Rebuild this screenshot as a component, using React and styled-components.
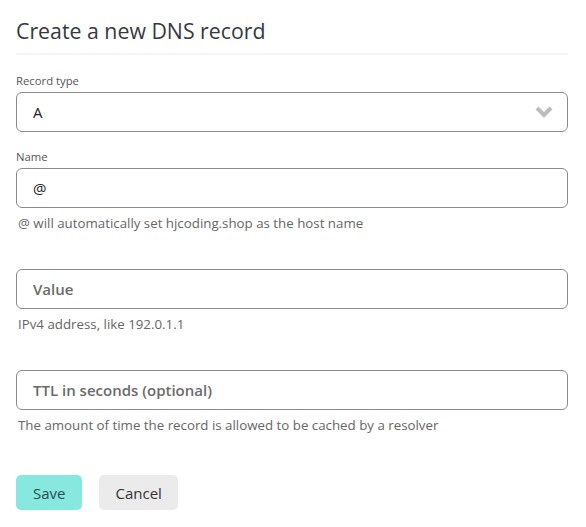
import React from "react";
import styled, { createGlobalStyle } from "styled-components";

const Global = createGlobalStyle`
  html, body { margin: 0; padding: 0; background: #fff; }
  body { font-family: "Open Sans", "Noto Sans", sans-serif; color: #333; }
  * { box-sizing: border-box; }
`;

const Page = styled.div`
  width: 586px;
  padding: 14px 18px 0 16px;
`;

const Title = styled.h2`
  margin: 0;
  font-size: 21.3px;
  font-weight: 500;
  line-height: 34px;
  color: #333a3f;
  padding-bottom: 5px;
  border-bottom: 2px solid #f4f4f4;
`;

const Form = styled.form`
  display: flex;
  flex-direction: column;
  padding-top: 18px;
`;

const Field = styled.div`
  display: flex;
  flex-direction: column;
  margin-bottom: ${(p) => p.$gap || 0}px;
`;

const Label = styled.label`
  font-size: 11.3px;
  line-height: 15px;
  color: #555;
  margin-bottom: 4px;
`;

const Box = styled.div`
  position: relative;
  height: 40px;
  border: 1px solid #8a8a8a;
  border-radius: 6px;
  display: flex;
  align-items: center;
  padding: 0 16px;
  font-size: 15px;
  color: ${(p) => (p.$placeholder ? "#6b6b6b" : "#222")};
  font-weight: ${(p) => (p.$placeholder ? 600 : 400)};
`;

const Chevron = styled.svg`
  position: absolute;
  right: 14px;
  top: 50%;
  transform: translateY(-50%);
`;

const Help = styled.div`
  font-size: 13.3px;
  line-height: 17px;
  color: #666;
  margin-top: 7px;
  padding-left: 2px;
`;

const Buttons = styled.div`
  display: flex;
  gap: 17px;
  margin-top: 41px;
`;

const Button = styled.button`
  height: 35px;
  border: none;
  border-radius: 5px;
  padding: 0 ${(p) => p.$px}px;
  font-family: inherit;
  font-size: 15px;
  background: ${(p) => (p.$primary ? "#86e8de" : "#ebebec")};
  color: ${(p) => (p.$primary ? "#2e4a55" : "#333")};
`;

export default function App() {
  return (
    <>
      <Global />
      <Page>
        <Title>Create a new DNS record</Title>
        <Form>
          <Field $gap={17}>
            <Label>Record type</Label>
            <Box>
              A
              <Chevron width="18" height="12" viewBox="0 0 18 12">
                <path d="M2 2 L9 9 L16 2" fill="none" stroke="#bcbcbc" strokeWidth="4" strokeLinejoin="miter" />
              </Chevron>
            </Box>
          </Field>
          <Field $gap={37}>
            <Label>Name</Label>
            <Box>@</Box>
            <Help>@ will automatically set hjcoding.shop as the host name</Help>
          </Field>
          <Field $gap={37}>
            <Box $placeholder>Value</Box>
            <Help>IPv4 address, like 192.0.1.1</Help>
          </Field>
          <Field>
            <Box $placeholder>TTL in seconds (optional)</Box>
            <Help>The amount of time the record is allowed to be cached by a resolver</Help>
          </Field>
          <Buttons>
            <Button type="button" $primary $px={17}>Save</Button>
            <Button type="button" $px={16}>Cancel</Button>
          </Buttons>
        </Form>
      </Page>
    </>
  );
}
